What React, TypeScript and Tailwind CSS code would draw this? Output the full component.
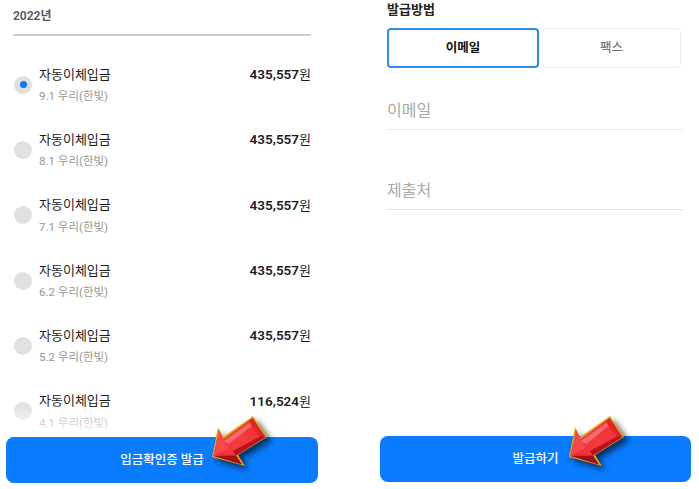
const font = { fontFamily: 'Roboto, "Noto Sans CJK KR", sans-serif' };

const deposits = [
  { date: '9.1', amount: '435,557', checked: true },
  { date: '8.1', amount: '435,557' },
  { date: '7.1', amount: '435,557' },
  { date: '6.2', amount: '435,557' },
  { date: '5.2', amount: '435,557' },
  { date: '4.1', amount: '116,524' },
];

// red 3d pointer arrow laid over the buttons
function Arrow({ className }: { className: string }) {
  return (
    <svg viewBox="0 0 72 68" width="72" height="68" className={className}>
      <defs>
        <filter id="arrowShadow" x="-20%" y="-20%" width="150%" height="150%">
          <feGaussianBlur stdDeviation="3" />
        </filter>
        <linearGradient id="arrowFill" x1="0" y1="1" x2="1" y2="0">
          <stop offset="0" stopColor="#ee2a2e" />
          <stop offset="0.5" stopColor="#f23c40" />
          <stop offset="1" stopColor="#f02c30" />
        </linearGradient>
      </defs>
      <polygon points="11,51 17,21 22,31 52,10 67,31 37,49 44,60" fill="#000" opacity="0.6" filter="url(#arrowShadow)" />
      <polygon points="7,47 13,17 18,27 48,6 62,27 33,45 40,56" fill="#d9ad0a" />
      <polygon points="8.5,46 14,20 18.5,29 47.5,8 60.5,27 31,45.5 37,54.5" fill="url(#arrowFill)" />
      <polygon points="8.5,46 14,20 18.5,29 24,38" fill="#f6484c" />
      <polygon points="19,31 47,11 49,14 24,34" fill="#f8686c" />
      <polygon points="47.5,8 60.5,27 56,28 44,12" fill="#e0242a" />
      <polygon points="8.5,46 31,45.5 37,54.5" fill="#a01016" />
      <polygon points="31,45.5 60.5,27 56,26 28,41" fill="#b8141a" />
    </svg>
  );
}

function DepositRow({ date, amount, checked }: { date: string; amount: string; checked?: boolean }) {
  return (
    <div className="flex h-[65.3px] items-center">
      <div className="flex h-[18px] w-[18px] shrink-0 items-center justify-center rounded-full bg-[#e0e0e0]">
        {checked && <div className="h-[7px] w-[7px] rounded-full bg-[#0a7cff]" />}
      </div>
      <div className="ml-[7px] flex-1">
        <div className="flex items-center justify-between text-[13px] leading-[20px] text-[#1c1c1c]">
          <span>자동이체입금</span>
          <span>
            <span className="text-[13.5px] font-semibold">{amount}</span>원
          </span>
        </div>
        <div className="mt-[2px] text-[11.5px] leading-[18px] text-[#969696]">{date} 우리(한빛)</div>
      </div>
    </div>
  );
}

export default function App() {
  return (
    <div className="flex h-[489px] w-[699px] overflow-hidden bg-white" style={font}>
      {/* 입금 내역 */}
      <div className="relative h-full w-[340px] overflow-hidden">
        <div className="pl-[13px] pr-[29px] pt-[7px]">
          <div className="text-[12px] font-semibold leading-[18px] text-[#555]">2022년</div>
          <div className="mt-[9px] h-[2px] bg-[#cccccc]" />
        </div>
        <div className="pl-[14px] pr-[29px] pt-[16px]">
          {deposits.map((d) => (
            <DepositRow key={d.date} {...d} />
          ))}
        </div>
        <div className="absolute bottom-0 left-0 right-0 h-[85px] bg-gradient-to-b from-white/0 to-white to-[40%]" />
        <button className="absolute left-[6px] top-[437px] h-[46px] w-[312px] rounded-[8px] bg-[#0a7cff] text-[12.5px] font-medium text-white">
          입금확인증 발급
        </button>
        <Arrow className="absolute left-[205px] top-[410px]" />
      </div>

      {/* 발급 방법 */}
      <div className="relative h-full flex-1 pl-[47px] pr-[15px]">
        <div className="text-[13px] font-semibold leading-[20px] text-[#222]">발급방법</div>
        <div className="mt-[8px] flex w-[294px] gap-[3px] text-[12.5px]">
          <div className="flex h-[40px] w-[152px] items-center justify-center rounded-[4px] border-2 border-[#2b8cf5] font-semibold text-[#111]">
            이메일
          </div>
          <div className="flex h-[40px] flex-1 items-center justify-center rounded-[4px] border border-[#f0f0f0] font-medium text-[#777]">
            팩스
          </div>
        </div>
        <div className="mt-[30px] border-b border-[#ececec] pb-[5px] text-[16px] leading-[26px] text-[#a8a8a8]">이메일</div>
        <div className="mt-[48px] border-b border-[#e2e2e2] pb-[5px] text-[16px] leading-[26px] text-[#a8a8a8]">제출처</div>
        <button className="absolute left-[40px] top-[436px] h-[46px] w-[311px] rounded-[8px] bg-[#0a7cff] text-[12.5px] font-medium text-white">
          발급하기
        </button>
        <Arrow className="absolute left-[222px] top-[410px]" />
      </div>
    </div>
  );
}
